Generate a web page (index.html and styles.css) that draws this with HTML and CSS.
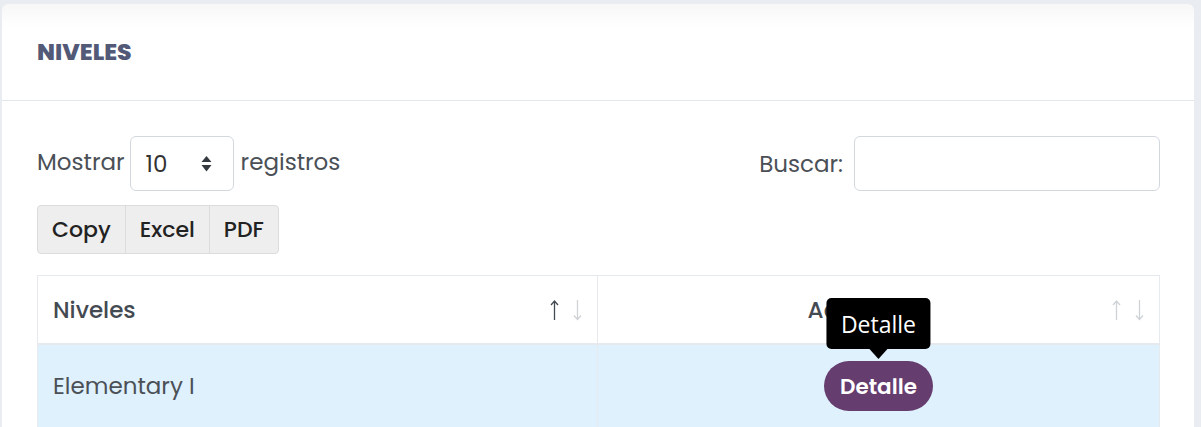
FILE: index.html
```html
<!DOCTYPE html>
<html lang="es">
<head>
<meta charset="utf-8">
<title>Niveles</title>
<link rel="stylesheet" href="styles.css">
</head>
<body>
<div class="card">
  <div class="card-header"><h2 class="card-title">NIVELES</h2></div>
  <div class="card-body">
    <div class="controls">
      <label class="length"><span class="lbl">Mostrar</span>
        <span class="select"><span class="select-val">10</span>
          <svg class="select-arrows" width="11" height="18" viewBox="0 0 11 18"><path d="M5.5 1 L10.5 7 H0.5 Z M0.5 10 H10.5 L5.5 16.5 Z" fill="#343a40"/></svg>
        </span>
        <span class="lbl">registros</span></label>
      <label class="search">Buscar: <span class="search-input"></span></label>
    </div>
    <div class="buttons">
      <span class="btn">Copy</span><span class="btn">Excel</span><span class="btn">PDF</span>
    </div>
    <div class="table">
      <div class="row head">
        <div class="cell left">Niveles
          <span class="sort">
            <svg width="9" height="21" viewBox="0 0 9 21"><path d="M4.5 1 V20 M1 5 L4.5 1 L8 5" fill="none" stroke="#444a52" stroke-width="1.3"/></svg>
            <svg width="9" height="21" viewBox="0 0 9 21"><path d="M4.5 0 V19 M1 15.5 L4.5 19.5 L8 15.5" fill="none" stroke="#cfd3d7" stroke-width="1.3"/></svg>
          </span>
        </div>
        <div class="cell center acc">Acciones
          <span class="sort">
            <svg width="9" height="21" viewBox="0 0 9 21"><path d="M4.5 1 V20 M1 5 L4.5 1 L8 5" fill="none" stroke="#cfd3d7" stroke-width="1.3"/></svg>
            <svg width="9" height="21" viewBox="0 0 9 21"><path d="M4.5 0 V19 M1 15.5 L4.5 19.5 L8 15.5" fill="none" stroke="#cfd3d7" stroke-width="1.3"/></svg>
          </span>
        </div>
      </div>
      <div class="row body">
        <div class="cell left">Elementary I</div>
        <div class="cell center">
          <span class="detail-wrap">
            <span class="tooltip">Detalle</span>
            <span class="detail">Detalle</span>
          </span>
        </div>
      </div>
    </div>
  </div>
</div>
</body>
</html>
```

FILE: styles.css
```css
html, body { margin: 0; padding: 0; }
body {
  background: #e9ecf0;
  font-family: "Poppins", "Open Sans", sans-serif;
  color: #4b5057;
  overflow: hidden;
  height: 427px;
}
.card {
  margin: 4px 0 0 2px;
  width: 1192px;
  height: 440px;
  background: linear-gradient(#f7f7f7 0, #ffffff 24px, #ffffff 100%);
  border-radius: 6px 6px 0 0;
}
.card-header {
  height: 97px;
  box-sizing: border-box;
  border-bottom: 1px solid #e3e7ee;
  display: flex;
  align-items: center;
  padding-left: 35px;
}
.card-title {
  margin: 0;
  font-size: 23.5px;
  font-weight: 800;
  color: #525a77;
  padding-bottom: 2px;
}
.card-body { padding: 35px 34px 0 35px; }
.controls {
  display: flex;
  justify-content: space-between;
  align-items: center;
  height: 55px;
}
.length, .search {
  display: flex;
  align-items: center;
  font-size: 23px;
  color: #4b5057;
}
.lbl { margin-bottom: 4px; }
.select {
  width: 104px;
  height: 55px;
  box-sizing: border-box;
  border: 1px solid #d3d8df;
  border-radius: 6px;
  margin: 0 7px 0 5px;
  display: flex;
  align-items: center;
  justify-content: space-between;
  padding: 0 21px 0 15px;
}
.select-val { font-size: 23px; color: #333; }
.select-arrows { margin-top: 1px; }
.search-input {
  width: 306px;
  height: 55px;
  box-sizing: border-box;
  border: 1px solid #d3d8df;
  border-radius: 6px;
  margin-left: 11px;
}
.buttons {
  display: flex;
  margin-top: 14px;
  width: max-content;
  border: 1px solid #dcdcdc;
  border-radius: 4px;
  background: #eeeeee;
}
.btn {
  height: 47px;
  display: flex;
  align-items: center;
  padding: 0 14px;
  font-size: 22px;
  font-weight: 500;
  color: #222;
  border-left: 1px solid #dcdcdc;
}
.btn:first-child { border-left: 0; padding-left: 14px; }
.table {
  margin-top: 21px;
  border: 1px solid #e6eaef;
  border-bottom: 0;
}
.row { display: grid; grid-template-columns: 559px 1fr; }
.cell {
  position: relative;
  display: flex;
  align-items: center;
  font-size: 23px;
  padding: 0 15px;
}
.cell + .cell { border-left: 1px solid #e6eaef; }
.head .cell { height: 67px; font-weight: 500; color: #444a52; padding-right: 45px; }
.head .acc { padding-right: 51px; }
.head { border-bottom: 2px solid #e6eaef; }
.body { background: #dff1fd; }
.body .cell { height: 82px; color: #4b5057; }
.center { justify-content: center; }
.sort {
  position: absolute;
  right: 15px;
  top: 24px;
  display: flex;
  gap: 14px;
}
.sort svg { display: block; }
.detail-wrap { position: relative; display: inline-flex; }
.detail {
  background: #653d6e;
  color: #fff;
  font-weight: 600;
  font-size: 21.5px;
  height: 50px;
  padding: 0 16px;
  border-radius: 25px;
  display: flex;
  align-items: center;
}
.tooltip {
  position: absolute;
  left: 50%;
  bottom: 62px;
  transform: translateX(-50%);
  background: #000;
  color: #fff;
  font-family: "Open Sans", sans-serif;
  font-weight: 400;
  font-size: 23px;
  padding: 0 14px;
  height: 51px;
  display: flex;
  align-items: center;
  border-radius: 5px;
  white-space: nowrap;
}
.tooltip::after {
  content: "";
  position: absolute;
  left: 50%;
  bottom: -10px;
  margin-left: -9px;
  border-left: 9px solid transparent;
  border-right: 9px solid transparent;
  border-top: 10px solid #000;
}
```
